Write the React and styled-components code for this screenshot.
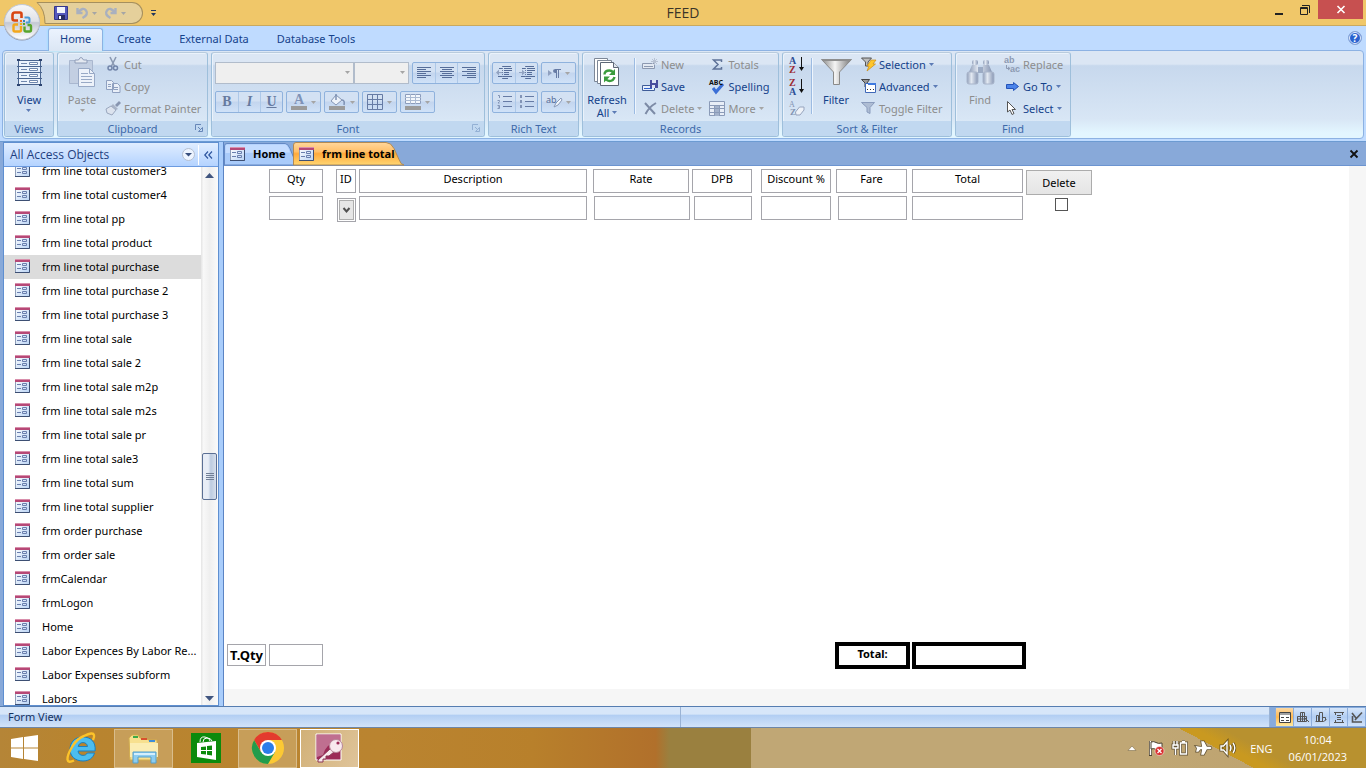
import styled, { createGlobalStyle, css } from "styled-components";

const GlobalStyle = createGlobalStyle`
  * {
    box-sizing: border-box;
  }

  body {
    margin: 0;
    font-family: "Noto Sans", "Open Sans", sans-serif;
    font-size: 11px;
    color: #000;
    overflow: hidden;
  }

  button,
  input,
  select {
    font: inherit;
    color: inherit;
    margin: 0;
    padding: 0;
  }

  svg {
    display: block;
    flex: none;
    overflow: visible;
  }
`;

/* ---------- window ---------- */

const Window = styled.div`
  display: flex;
  flex-direction: column;
  height: 100vh;
  background-color: #bfdbff;
`;
const TitleBar = styled.header`
  position: relative;
  display: flex;
  flex: none;
  align-items: flex-start;
  justify-content: space-between;
  height: 26px;
  background-color: #f0c769;
  border-bottom: 1px solid #c9a95f;
`;
const OfficeButton = styled.button`
  position: absolute;
  left: 3px;
  top: 3px;
  z-index: 2;
  border: none;
  background: none;
`;
const QuickAccess = styled.div`
  display: flex;
  align-items: center;
  height: 22px;
  margin: 2px 0 0 36px;
`;
const QuickPill = styled.div`
  display: flex;
  align-items: center;
  gap: 8px;
  height: 22px;
  width: 97px;
  padding-left: 8px;
  background-color: #e5d09b;
  border: 1px solid #a58f5d;
  border-left: none;
  border-radius: 0 11px 11px 0;
`;
const IconButton = styled.button`
  display: flex;
  align-items: center;
  justify-content: center;
  gap: 4px;
  border: none;
  background: none;
`;
const QuickMore = styled(IconButton)`
  margin-left: 8px;
`;
const AppTitle = styled.h1`
  position: absolute;
  left: 50%;
  top: 3px;
  transform: translateX(-50%);
  margin: 0;
  font-family: "Open Sans", sans-serif;
  font-size: 14px;
  line-height: 20px;
  font-weight: 400;
  color: #3a3428;
`;
const WindowButtons = styled.div`
  display: flex;
  margin-right: 3px;
`;
const WindowButton = styled.button`
  display: flex;
  align-items: center;
  justify-content: center;
  width: ${(props) => (props.$close ? "45px" : "26px")};
  height: 19px;
  border: none;
  background-color: ${(props) => (props.$close ? "#c75050" : "transparent")};
`;

/* ---------- ribbon ---------- */

const TabRow = styled.nav`
  display: flex;
  flex: none;
  align-items: flex-end;
  height: 24px;
  padding: 0 4px 0 48px;
  background-color: #bfdbff;
`;
const RibbonTab = styled.button`
  height: 22px;
  padding: 0 ${(props) => (props.$wide ? "13px" : "11px")} 2px;
  border: 1px solid transparent;
  border-bottom: none;
  border-radius: 3px 3px 0 0;
  background: none;
  line-height: 18px;
  color: #15428b;

  ${(props) =>
    props.$active &&
    css`
      position: relative;
      z-index: 1;
      height: 23px;
      margin-bottom: -1px;
      padding-bottom: 3px;
      border-color: #8db2e3;
      background: linear-gradient(#ebf3fe, #dbe6f4);
      box-shadow: 0 0 2px #7fe3ff;
    `}
`;
const HelpButton = styled(IconButton)`
  margin: 0 0 5px auto;
`;
const Ribbon = styled.section`
  display: flex;
  flex: none;
  gap: 3px;
  height: 89px;
  margin: 0 2px;
  padding: 1px;
  border: 1px solid #8db2e3;
  border-radius: 4px;
  background: linear-gradient(#dbe6f4 0 15%, #c7d8ed 17%, #d8e6f5 78%, #e3f6ff 94%);
`;
const GroupBox = styled.section`
  display: flex;
  flex-direction: column;
  flex: none;
  width: ${(props) => props.$width}px;
  border: 1px solid #9ebfdb;
  border-top-color: #b9cbdd;
  border-radius: 3px;
  box-shadow: inset 1px 1px 0 #eaf2fb;
  overflow: hidden;
`;
const GroupBody = styled.div`
  display: flex;
  flex: 1;
  min-height: 0;
  padding: 0 3px;
`;
const GroupTitle = styled.div`
  position: relative;
  height: 15px;
  line-height: 15px;
  text-align: center;
  color: #3e6aaa;
  background-color: #c1d8f0;
`;
const Launcher = styled.button`
  position: absolute;
  right: 4px;
  top: 3px;
  border: none;
  background: none;
  opacity: ${(props) => (props.disabled ? 0.5 : 1)};
`;
const BigButton = styled.button`
  display: flex;
  flex-direction: column;
  align-items: center;
  width: ${(props) => props.$width || 42}px;
  padding-top: 2px;
  border: none;
  background: none;
  line-height: 13px;
  color: ${(props) => (props.disabled ? "#8d8d8d" : "#15428b")};
`;
const BigIcon = styled.span`
  display: flex;
  align-items: center;
  height: 34px;
  margin-bottom: 4px;
`;
const BigLabel = styled.span`
  display: flex;
  flex-direction: ${(props) => (props.$inline ? "row" : "column")};
  align-items: center;
  gap: 3px;
`;
const Stack = styled.div`
  display: flex;
  flex-direction: column;
  margin-left: ${(props) => props.$gap || 0}px;
`;
const SmallButton = styled.button`
  display: flex;
  align-items: center;
  gap: 3px;
  height: 22px;
  border: none;
  background: none;
  white-space: nowrap;
  color: ${(props) => (props.disabled ? "#8d8d8d" : "#15428b")};
`;
const IconSlot = styled.span`
  display: flex;
  justify-content: center;
  width: 16px;
`;
const Separator = styled.span`
  width: 2px;
  height: 56px;
  margin: 5px 6px 0;
  background-color: #9cbbe2;
  border-right: 1px solid #eef5fd;
`;
const ToolRows = styled.div`
  display: flex;
  flex: 1;
  flex-direction: column;
  gap: 7px;
  padding-top: 9px;
`;
const ToolRow = styled.div`
  display: flex;
  gap: 3px;
`;
const Combos = styled.div`
  display: flex;
`;
const ToolGroup = styled.div`
  display: flex;
  height: 22px;
  border: 1px solid #8fb2dd;
  border-radius: 2px;
  background: linear-gradient(#d3e1f3 0 45%, #c3d5ee 50%, #d0e2f8);
`;
const ToolButton = styled.button`
  display: flex;
  align-items: center;
  justify-content: center;
  gap: 4px;
  width: ${(props) => (props.$menu ? "33px" : "22px")};
  border: none;
  background: none;

  & + & {
    border-left: 1px solid #adc8e8;
  }
`;
const SelectWrap = styled.label`
  position: relative;
  width: ${(props) => props.$width}px;
  height: 22px;

  svg {
    position: absolute;
    right: 4px;
    top: 9px;
  }
`;
const FontSelect = styled.select`
  appearance: none;
  width: 100%;
  height: 100%;
  border: 1px solid #b1bccb;
  border-radius: 0;
  background-color: #efefef;
  opacity: 1;
`;

/* ---------- navigation pane ---------- */

const Main = styled.main`
  display: flex;
  flex: 1;
  min-height: 0;
  margin-top: 2px;
  border-top: 1px solid #6c9bd2;
  background-color: #88a9d9;
`;
const NavPane = styled.aside`
  display: flex;
  flex-direction: column;
  flex: none;
  width: 216px;
  margin-left: 3px;
  border: 1px solid #5f8fd0;
  background-color: #fff;
`;
const NavHeader = styled.div`
  display: flex;
  flex: none;
  align-items: center;
  height: 24px;
  padding-left: 6px;
  border-bottom: 1px solid #6c9be0;
  background: linear-gradient(#e0edff, #b4d3ff);
`;
const NavTitle = styled.h2`
  flex: 1;
  margin: 0;
  font-family: "Open Sans", sans-serif;
  font-size: 12px;
  font-weight: 400;
  color: #1f3f80;
`;
const NavCollapse = styled(IconButton)`
  width: 20px;
  height: 20px;
  margin-left: 3px;
  border-left: 1px solid #fff;
`;
const NavBody = styled.div`
  display: flex;
  flex: 1;
  min-height: 0;
`;
const NavList = styled.ul`
  display: flex;
  flex-direction: column;
  justify-content: flex-end;
  flex: 1;
  min-width: 0;
  margin: 0;
  padding: 0;
  list-style: none;
  overflow: hidden;
`;
const NavItem = styled.li`
  flex: none;
  height: 24px;
  background-color: ${(props) => (props.$selected ? "#dcdcdc" : "transparent")};

  &:last-child {
    height: 18px;
  }
`;
const NavLink = styled.a`
  display: flex;
  align-items: center;
  gap: 12px;
  height: 22px;
  padding-left: 11px;
  text-decoration: none;
  white-space: nowrap;
  color: #000;
`;
const ScrollTrack = styled.div`
  display: flex;
  flex-direction: column;
  align-items: center;
  justify-content: space-between;
  width: 17px;
  padding: 6px 0 4px;
  background: linear-gradient(90deg, #e4e4e4, #f8f8f8 15%, #efefef 50%, #fafafa);
`;
const ScrollThumb = styled.div`
  display: flex;
  align-items: center;
  justify-content: center;
  width: 15px;
  height: 47px;
  border: 1px solid #5b6f94;
  border-radius: 2px;
  background: linear-gradient(90deg, #e8edf6 40%, #bccbe0 60%, #d8e0ec);
`;
const ScrollSpace = styled.div`
  flex: ${(props) => props.$grow};
`;

/* ---------- document ---------- */

const Splitter = styled.div`
  flex: none;
  width: 5px;
  border-right: 1px solid #5b84c4;
  background-color: #a9cdfb;
`;
const Document = styled.section`
  display: flex;
  flex: 1;
  flex-direction: column;
  min-width: 0;
  background-color: #f6f6f6;
`;
const DocTabs = styled.div`
  display: flex;
  flex: none;
  align-items: flex-end;
  height: 24px;
  border-bottom: 1px solid #6c94d0;
  background-color: #88a9d9;
`;
const DocTab = styled.button`
  position: relative;
  display: flex;
  align-items: center;
  width: ${(props) => props.$width}px;
  height: 23px;
  margin-right: -2px;
  border: none;
  background: none;
  font-family: "Open Sans", sans-serif;
  font-weight: 700;

  & > svg:first-child {
    position: absolute;
    left: 0;
    top: 0;
  }
`;
const DocTabText = styled.span`
  position: relative;
  display: flex;
  align-items: center;
  gap: 8px;
  padding-left: 6px;
  white-space: nowrap;
`;
const DocClose = styled(IconButton)`
  margin: 0 8px 7px auto;
`;
const FormArea = styled.form`
  display: flex;
  flex: 1;
  flex-direction: column;
  margin: 0 17px 17px 0;
  padding: 3px 0 20px 45px;
  background-color: #fff;
`;
const FormRow = styled.div`
  display: flex;
  align-items: flex-start;
  height: 27px;
`;
const HeadCell = styled.div`
  width: ${(props) => props.$width}px;
  height: 24px;
  margin-left: ${(props) => props.$gap}px;
  border: 1px solid #a5a5ab;
  line-height: 17px;
  text-align: center;
  white-space: nowrap;
`;
const Field = styled.input`
  width: ${(props) => props.$width}px;
  height: 24px;
  margin-left: ${(props) => props.$gap || 0}px;
  border: 1px solid #a5a5ab;
  border-radius: 0;
  background-color: #fff;
`;
const ComboButton = styled.button`
  display: flex;
  align-items: center;
  justify-content: center;
  width: 19px;
  height: 24px;
  margin: 2px 0 0 14px;
  border: 1px solid #a5a5ab;
  background-color: #e6e6e6;
  box-shadow: inset 0 0 0 1px #fff, inset 0 0 0 2px #adadad;
`;
const DeleteButton = styled.button`
  width: 66px;
  height: 25px;
  margin: 1px 0 0 3px;
  border: 1px solid #acacac;
  background: linear-gradient(#f0f0f0, #e5e5e5);
`;
const RowCheck = styled.input`
  appearance: none;
  width: 13px;
  height: 13px;
  margin: 2px 0 0 32px;
  border: 1px solid #555;
  background-color: #fff;
`;
const FormFooter = styled.div`
  display: flex;
  align-items: flex-start;
  height: 27px;
  margin: auto 0 0 -42px;
  font-weight: 700;
`;
const QtyLabel = styled.label`
  width: 39px;
  height: 22px;
  margin: 2px 3px 0 0;
  border: 1px solid #a5a5ab;
  font-size: 13px;
  line-height: 20px;
  text-align: center;
`;
const QtyField = styled(Field)`
  height: 22px;
  margin-top: 2px;
`;
const TotalLabel = styled.label`
  width: 75px;
  height: 27px;
  margin: 0 2px 0 512px;
  border: 4px solid #000;
  line-height: 16px;
  text-align: center;
`;
const TotalField = styled.input`
  width: 114px;
  height: 27px;
  border: 4px solid #000;
  border-radius: 0;
  background-color: #fff;
`;

/* ---------- status bar and taskbar ---------- */

const StatusBar = styled.footer`
  display: flex;
  flex: none;
  height: 22px;
  border-top: 1px solid #567db1;
  border-bottom: 1px solid #6d86a8;
  line-height: 20px;
  color: #15315f;
  background: linear-gradient(#d7e6f9 0 35%, #b2cef3 42%, #d2e3f9);
`;
const StatusPart = styled.span`
  flex: ${(props) => props.$grow};
  padding-left: 8px;
  border-right: 1px solid #9ab3d5;
`;
const ViewButtons = styled.div`
  display: flex;
  padding: 1px 1px 1px 5px;
  background-color: #87abdc;
`;
const ViewButton = styled(IconButton)`
  width: 18px;
  border-left: 1px solid #8faedb;
  background: ${(props) =>
    props.$active
      ? "linear-gradient(#fbd9a5, #ffb84f 50%, #ffeaa0)"
      : "linear-gradient(#d7e6f9, #b2cef3 50%, #d2e3f9)"};
`;
const Taskbar = styled.nav`
  display: flex;
  flex: none;
  align-items: center;
  height: 40px;
  background: linear-gradient(28deg, transparent 87%, #c99920 87% 88%, #b8912f 90%),
    linear-gradient(
      90deg,
      #b58537 0%,
      #b8842f 6%,
      #ba8430 28%,
      #b8802b 39%,
      #b1702b 48%,
      #9a803f 49% 55%,
      #c0a775 55% 84%,
      #bda06a
    );
`;
const TaskButton = styled.button`
  display: flex;
  align-items: center;
  justify-content: center;
  width: 59px;
  height: 39px;
  margin-right: 3px;
  border: 1px solid
    ${(props) => (props.$active ? "#fff" : props.$open ? "#d9bd8c" : "transparent")};
  background: ${(props) =>
    props.$active
      ? "linear-gradient(120deg, #d1b077, #dfc49a)"
      : props.$open
        ? "#c79e59"
        : "transparent"};
`;
const StartButton = styled(TaskButton)`
  width: 49px;
`;
const Tray = styled.div`
  display: flex;
  align-items: center;
  gap: 8px;
  margin-left: auto;
  padding-right: 19px;
  font-family: "Open Sans", sans-serif;
  color: #fff;
`;
const TrayMore = styled(IconButton)`
  margin-right: 4px;
`;
const Lang = styled.span`
  margin: 0 8px 0 6px;
`;
const Clock = styled.time`
  line-height: 17px;
  text-align: center;
`;

/* ---------- icons ---------- */

const Icon = ({ w = 16, h = 16, children, ...rest }) => (
  <svg width={w} height={h} viewBox={`0 0 ${w} ${h}`} fill="none" aria-hidden="true" {...rest}>
    {children}
  </svg>
);

const Arrow = ({ color = "#5c7bb5" }) => (
  <Icon w={5} h={3}>
    <path d="M0 0h5L2.500 3z" fill={color} />
  </Icon>
);
const GreyArrow = () => <Arrow color="#a5a5a5" />;

const OfficeLogo = () => (
  <Icon w={38} h={38}>
    <defs>
      <linearGradient id="orb" x1="0" y1="0" x2="0" y2="1">
        <stop offset="0" stopColor="#f8f8fa" />
        <stop offset=".48" stopColor="#dfe1e7" />
        <stop offset=".52" stopColor="#c3c8d3" />
        <stop offset="1" stopColor="#fff" />
      </linearGradient>
    </defs>
    <circle cx="19" cy="19.500" r="18" fill="#8b93a5" />
    <circle cx="19" cy="19" r="17.500" fill="url(#orb)" stroke="#c5cad4" />
    <path d="M15 17.500h-3.500q-2 0-2-2V12q0-2.500 2.500-2.500h5q1.500 0 1.500 1.500v4" stroke="#d94512" strokeWidth="2.600" />
    <path d="M21.500 14.500H25q1.500 0 1.500 1.500v2.500q0 1-1.500 1h-2" stroke="#4a9bd8" strokeWidth="2" />
    <path d="M15 21.500h-3q-1.500 0-1.500 1.500v4q0 1.500 1.500 1.500h4.500q1.500 0 1.500-1.500v-4" stroke="#f3a71b" strokeWidth="2.400" />
    <path d="M21.500 23.500v3.500q0 1.500 1.500 1.500h3.500q1.500 0 1.500-1.500v-3.500q0-1.500-1.500-1.500H24.500" stroke="#58a52c" strokeWidth="2.400" />
    <path d="M17 17h2v2h-2z" fill="#f06a20" />
    <path d="M20 17h2v2h-2z" fill="#357fc4" />
    <path d="M17 20h2v2h-2z" fill="#f3b21b" />
    <path d="M20 20h2v2h-2z" fill="#58a52c" />
  </Icon>
);
const QuickCurve = () => (
  <Icon w={10} h={22}>
    <path d="M1 .5Q9 7 9.500 21.500H10V.5z" fill="#e5d09b" />
    <path d="M10 .5H1Q9 7 9 21.500h1" stroke="#a58f5d" />
  </Icon>
);
const DiskIcon = () => (
  <Icon w={14} h={14}>
    <path d="M.5.5h13v13h-13z" fill="#5558bd" stroke="#34378a" />
    <path d="M3 1h8v6H3z" fill="#f2f4fb" />
    <path d="M4 9h7v5H4z" fill="#292b63" />
    <path d="M5 10h2v3H5z" fill="#fff" />
  </Icon>
);
const UndoIcon = ({ flip }) => (
  <Icon w={12} h={12}>
    <g transform={flip ? "translate(12 0) scale(-1 1)" : undefined}>
      <path d="M1.500 1v5h5M2 5.500Q7-.5 10 3.500T6.500 11" stroke="#a9b0bf" strokeWidth="2.400" />
    </g>
  </Icon>
);
const FormIcon = () => (
  <Icon w={15} h={14}>
    <defs>
      <linearGradient id="frm" x1="0" y1="0" x2="1" y2="1">
        <stop offset="0" stopColor="#fff" />
        <stop offset="1" stopColor="#b9d3f5" />
      </linearGradient>
    </defs>
    <path d="M.5.5h14v13H.5z" fill="url(#frm)" stroke="#8e9db8" />
    <path d="M14.500 3v10.500H0" stroke="#3d4f73" />
    <path d="M0 0h15v3H0z" fill="#b64876" />
    <path d="M0 0h15v1H0z" fill="#d98fac" />
    <path d="M2 5.500h4M2 9.500h4M7.500 4.500h4v2h-4zM7.500 8.500h4v2h-4z" stroke="#6a7fae" />
  </Icon>
);
const ViewIcon = () => (
  <Icon w={27} h={29}>
    <path d="M2 2h23v25H2z" fill="#eaf2fc" />
    <path d="M2.500 1.500v26M24.500 1.500v26M1 2.500h25M1 8.500h25M1 14.500h25M1 20.500h25M1 26.500h25" stroke="#49648f" />
    <path d="M5 5.500h6M5 11.500h6M5 17.500h6M5 23.500h6" stroke="#6f87ad" />
    <path d="M13.500 4.500h8v2h-8zM13.500 10.500h8v2h-8zM13.500 16.500h8v2h-8zM13.500 22.500h8v2h-8z" fill="#fff" stroke="#6f87ad" />
    <path d="M1 1h3v2H1zM23 1h3v2h-3zM1 26h3v2H1zM23 26h3v2h-3z" fill="#2d4470" />
  </Icon>
);
const PasteIcon = () => (
  <Icon w={27} h={30}>
    <path d="M.5 3.500h23v23H.5z" fill="#c3cfe2" stroke="#a9b7cf" />
    <path d="M6 6V3h3.500q2.500-5 5 0H18v3z" fill="#e4e9f1" stroke="#8f9db8" />
    <path d="M9.500 11.500h11l5 5v13h-16z" fill="#edf2fa" stroke="#98a9c6" />
    <path d="M20.500 11.500v5h5M12 16.500h7M12 19.500h11M12 22.500h11M12 25.500h11" stroke="#98a9c6" />
  </Icon>
);
const CutIcon = () => (
  <Icon w={12} h={14}>
    <path d="M3 0l4.500 9M9 0L4.500 9" stroke="#8c9ab3" strokeWidth="1.600" />
    <circle cx="3" cy="11" r="2" stroke="#7285aa" strokeWidth="1.500" />
    <circle cx="8.500" cy="11" r="2" stroke="#7285aa" strokeWidth="1.500" />
  </Icon>
);
const CopyIcon = () => (
  <Icon w={15} h={13}>
    <path d="M.5.5h5l2 2v7h-7zM6.500 3.500h5l2.500 2.500v6.500H6.500z" fill="#e9eff8" stroke="#8fa0c0" />
    <path d="M2 4.500h3M2 6.500h3M8 7.500h4M8 9.500h4" stroke="#8fa0c0" />
  </Icon>
);
const BrushIcon = () => (
  <Icon w={15} h={14}>
    <path d="M9 4l4-4 2 2-4 4z" fill="#8795b0" />
    <path d="M7 3l5 5-2 1-5-4z" fill="#a9b4c7" />
    <path d="M5 5l5 4-4 5-5-2-1-4z" fill="#dce3ee" stroke="#9aa7be" />
  </Icon>
);
const LauncherIcon = () => (
  <Icon w={8} h={8}>
    <path d="M.5 6V.5H6M3.500 7.500h4v-4z" stroke="#6787b8" />
    <path d="M3 3l3 3" stroke="#6787b8" />
  </Icon>
);
const LinesIcon = ({ short = "left" }) => {
  const x = { left: 0, center: 2, right: 5 }[short];
  const len = short === "center" ? 10 : 9;
  return (
    <Icon w={14} h={12}>
      <path
        d={`M0 .5h14M${x} 2.500h${len}M0 4.500h14M${x} 6.500h${len}M0 8.500h14M${x} 10.500h${len}`}
        stroke="#566d99"
      />
    </Icon>
  );
};
const ToolLetter = styled.span`
  font-family: "Liberation Serif", serif;
  font-size: 14px;
  line-height: 14px;
  font-weight: 700;
  font-style: ${(props) => (props.$italic ? "italic" : "normal")};
  text-decoration: ${(props) => (props.$underline ? "underline" : "none")};
  color: #667a9f;
`;
const ColorLetter = styled(ToolLetter)`
  width: 16px;
  height: 16px;
  border-bottom: 4px solid #9b9b9b;
  line-height: 12px;
  color: #7e92b7;
`;
const BucketIcon = () => (
  <Icon w={17} h={16}>
    <path d="M7 1l6 5-6 5-5-4z" fill="#eef3fa" stroke="#8495b4" />
    <path d="M7 0v6M13 6q3 0 2 5" stroke="#7d90b3" strokeWidth="1.500" />
    <path d="M0 12h16v4H0z" fill="#9b9b9b" />
  </Icon>
);
const GridIcon = () => (
  <Icon w={16} h={16}>
    <path d="M.5.5h15v15H.5zM5.500 0v16M10.500 0v16M0 5.500h16M0 10.500h16" stroke="#667ba5" />
  </Icon>
);
const AltRowIcon = () => (
  <Icon w={16} h={16}>
    <path d="M.5.5h15v9H.5z" fill="#f3f7fc" stroke="#8b9cbc" />
    <path d="M5.500 0v10M10.500 0v10M0 3.500h16M0 6.500h16" stroke="#aab9d1" />
    <path d="M0 12h16v4H0z" fill="#9b9b9b" />
  </Icon>
);
const IndentIcon = ({ flip }) => (
  <Icon w={16} h={14}>
    <path d="M7 .5h8M3 2.500h3M8 2.500h8M8 4.500h8M8 6.500h5M8 8.500h5M2 10.500h14M7 12.500h5" stroke="#566d99" />
    <path d={flip ? "M0 6h3V3.500L6 6.500 3 9.500V7H0z" : "M6 6H3V3.500L0 6.500l3 3V7h3z"} fill="#91a2c1" />
    <path d="M6.500 0v14" stroke="#6c80a6" strokeDasharray="1 1" />
  </Icon>
);
const ParagraphIcon = () => (
  <Icon w={13} h={10}>
    <path d="M0 2l4 3-4 3z" fill="#8fa0c0" />
    <path d="M9 1H7.500Q5 1 5 3t2.500 2H9z" fill="#667ba5" />
    <path d="M8.500 1v9M10.500 1v9M8 1.500h5" stroke="#667ba5" />
  </Icon>
);
const ListIcon = ({ numbered }) => (
  <Icon w={15} h={14}>
    <path d="M6 1.500h9M6 6.500h9M6 11.500h9" stroke="#667ba5" />
    {numbered ? (
      <path d="M1 .5h1.500V3M.5 5.500h2v1L1 8h1.500M.5 10.500h2v3h-2M1 12h1" stroke="#8294b6" />
    ) : (
      <path d="M1 0h2v3H1zM1 5h2v3H1zM1 10h2v3H1z" fill="#8294b6" />
    )}
  </Icon>
);
const HighlightIcon = () => (
  <Icon w={16} h={13}>
    <path d="M8 11l2-4 5-5 1 2-4 5z" fill="#f4f7fb" stroke="#8798b7" />
    <text x="0" y="7" fontSize="9" fill="#566d99">ab</text>
  </Icon>
);
const RefreshIcon = () => (
  <Icon w={26} h={29}>
    <path d="M.5.5h13v23H.5z" fill="#fff" stroke="#7d8797" />
    <path d="M3.500 2.500h14v23h-14z" fill="#fff" stroke="#7d8797" />
    <path d="M6.500 4.500h13l5 5v18h-18z" fill="#fff" stroke="#5d6777" />
    <path d="M19.500 4.500v5h5" fill="#dfe4ec" stroke="#5d6777" />
    <path d="M10.500 16.500q0-4 5-4 2 0 4 2" stroke="#3a9c3d" strokeWidth="2.400" />
    <path d="M21 11v6h-6z" fill="#3a9c3d" />
    <path d="M20.500 19q-1 4-5 4-2 0-4-2" stroke="#3a9c3d" strokeWidth="2.400" />
    <path d="M10 24.500v-6h6z" fill="#3a9c3d" />
  </Icon>
);
const NewIcon = () => (
  <Icon w={16} h={12}>
    <path d="M.5 5.500h12v5H.5z" fill="#e3e9f2" stroke="#8c99b1" />
    <path d="M2 8.500h9" stroke="#8c99b1" />
    <path d="M12.500 0v7M9 3.500h7M10 1l5 5M15 1l-5 5" stroke="#b8c2d3" />
  </Icon>
);
const SaveIcon = () => (
  <Icon w={16} h={12}>
    <path d="M.5 5.500h12v5H.5z" fill="#e6effc" stroke="#3f5c98" />
    <path d="M2 8h8v1H2z" fill="#2f5fc9" />
    <path d="M8 0h8v8H8z" fill="#4a4e9e" />
    <path d="M10 0h4v3h-4zM10 5h3v3h-3z" fill="#dfe5f5" />
  </Icon>
);
const CrossIcon = () => (
  <Icon w={13} h={13}>
    <path d="M1 1l10 11M12 1Q5 5 1.500 12" stroke="#7d8ba6" strokeWidth="2" />
  </Icon>
);
const SigmaIcon = () => (
  <Icon w={11} h={11}>
    <path d="M9.500 3V1H1.500l4.500 4.500L1.500 10h8V8" stroke="#5e7298" strokeWidth="1.500" />
  </Icon>
);
const SpellingIcon = () => (
  <Icon w={16} h={15}>
    <path d="M4 9l3 4 7-8" stroke="#3b6fd6" strokeWidth="3" />
    <text x="0" y="6" fontSize="7" fontWeight="700" fill="#111">ABC</text>
  </Icon>
);
const MoreIcon = () => (
  <Icon w={16} h={15}>
    <path d="M.5.5h15v14H.5z" fill="#e8eef7" stroke="#8b9bb8" />
    <path d="M6 4h5v11H6z" fill="#a3b2cb" />
    <path d="M0 4.500h16M0 7.500h16M0 11.500h16M5.500 4v11M10.500 4v11" stroke="#8b9bb8" />
  </Icon>
);
const SortIcon = ({ top, bottom, topColor, bottomColor }) => (
  <Icon w={16} h={17}>
    <text x="0" y="8" fontSize="10" fontWeight="700" fontFamily="Liberation Serif" fill={topColor}>{top}</text>
    <text x="0" y="17" fontSize="10" fontWeight="700" fontFamily="Liberation Serif" fill={bottomColor}>{bottom}</text>
    <path d="M12.500 1v13" stroke="#111" />
    <path d="M10 11h5l-2.500 4z" fill="#111" />
  </Icon>
);
const ClearSortIcon = () => (
  <Icon w={16} h={16}>
    <text x="0" y="7" fontSize="8" fontFamily="Liberation Serif" fill="#8494b2">A</text>
    <text x="1" y="15" fontSize="9" fontWeight="700" fontFamily="Liberation Serif" fill="#8494b2">Z</text>
    <path d="M6.500 12l4-5h4.500v3l-4 5H7z" fill="#eef2f8" stroke="#97a4bd" />
  </Icon>
);
const FunnelIcon = () => (
  <Icon w={31} h={28}>
    <defs>
      <linearGradient id="fun">
        <stop offset="0" stopColor="#878787" />
        <stop offset=".45" stopColor="#f5f5f5" />
        <stop offset="1" stopColor="#777" />
      </linearGradient>
    </defs>
    <path d="M.5 1.500h30L18.500 14v12.500h-6V14z" fill="url(#fun)" stroke="#8a8a8a" />
    <path d="M1 1h29v2H1z" fill="#8e8e8e" />
  </Icon>
);
const SelectionIcon = () => (
  <Icon w={15} h={15}>
    <path d="M.5 1h10L7 5v4H4.500V5z" fill="#bdbdbd" stroke="#555" />
    <path d="M10 3h5l-3 4h2.500L6 14l2-5H6z" fill="#ffc62b" stroke="#c88b14" strokeWidth=".7" />
  </Icon>
);
const AdvancedIcon = () => (
  <Icon w={15} h={14}>
    <path d="M.5.5h8L6 4v4H4V4z" fill="#999" stroke="#444" />
    <path d="M4.500 4.500h10v9h-10z" fill="#fff" stroke="#3f68b8" />
    <path d="M7 4h8v2H7z" fill="#3f7ae0" />
    <path d="M6 10h1v1H6zM9 10h1v1H9zM12 10h1v1h-1z" fill="#333" />
  </Icon>
);
const ToggleIcon = () => (
  <Icon w={14} h={12}>
    <path d="M.5.5h13L9 5.500v6L6 10V5.500z" fill="#aebdd4" stroke="#8a9cbd" />
  </Icon>
);
const FindIcon = () => (
  <Icon w={27} h={25}>
    <defs>
      <linearGradient id="bin">
        <stop offset="0" stopColor="#8f9eb9" />
        <stop offset=".4" stopColor="#e3e9f2" />
        <stop offset="1" stopColor="#8796b3" />
      </linearGradient>
    </defs>
    <rect x="5" width="6" height="5" rx="2" fill="url(#bin)" />
    <rect x="16" width="6" height="5" rx="2" fill="url(#bin)" />
    <path d="M5 5h6l1 7H2zM16 5h6l3 7H15z" fill="url(#bin)" />
    <path d="M11 7h5v6h-5z" fill="#9cabc4" />
    <rect y="12" width="11" height="12" rx="2" fill="url(#bin)" stroke="#a9b5ca" />
    <rect x="16" y="12" width="11" height="12" rx="2" fill="url(#bin)" stroke="#a9b5ca" />
  </Icon>
);
const ReplaceIcon = () => (
  <Icon w={16} h={15}>
    <text x="0" y="6" fontSize="9" fontWeight="700" fontFamily="Liberation Sans" fill="#8d9ab2">ab</text>
    <text x="6" y="15" fontSize="9" fontWeight="700" fontFamily="Liberation Sans" fill="#8d9ab2">ac</text>
    <path d="M2.500 8v3.500h3M4 10l2 1.500L4 13" stroke="#8d9ab2" />
  </Icon>
);
const GoToIcon = () => (
  <Icon w={13} h={9}>
    <path d="M.5 2.500h7v-2l5 4-5 4v-2h-7z" fill="#4a83ea" stroke="#2553b8" />
  </Icon>
);
const CursorIcon = () => (
  <Icon w={10} h={14}>
    <path d="M.5.5v10.500l2.500-2 2 4.500 2-1-2-4h3.500z" fill="#fff" stroke="#555" />
  </Icon>
);
const TrayIcon = ({ d, fill }) => (
  <Icon>
    <path d={d} stroke="#3c321f" strokeWidth="3" opacity=".7" />
    <path d={d} stroke="#fff" strokeWidth="1.400" fill={fill} />
  </Icon>
);

/* ---------- data ---------- */

const objects = [
  "frm line total customer3",
  "frm line total customer4",
  "frm line total pp",
  "frm line total product",
  "frm line total purchase",
  "frm line total purchase 2",
  "frm line total purchase 3",
  "frm line total sale",
  "frm line total sale 2",
  "frm line total sale m2p",
  "frm line total sale m2s",
  "frm line total sale pr",
  "frm line total sale3",
  "frm line total sum",
  "frm line total supplier",
  "frm order purchase",
  "frm order sale",
  "frmCalendar",
  "frmLogon",
  "Home",
  "Labor Expences By Labor Re...",
  "Labor Expenses subform",
  "Labors",
];

const columns = [
  { name: "Qty", width: 54, gap: 0 },
  { name: "ID", width: 20, gap: 13 },
  { name: "Description", width: 228, gap: 3 },
  { name: "Rate", width: 96, gap: 6 },
  { name: "DPB", width: 60, gap: 3 },
  { name: "Discount %", width: 70, gap: 9 },
  { name: "Fare", width: 71, gap: 5 },
  { name: "Total", width: 111, gap: 5 },
];

const fields = [
  { name: "Description", width: 228, gap: 3 },
  { name: "Rate", width: 96, gap: 7 },
  { name: "DPB", width: 58, gap: 4 },
  { name: "Discount %", width: 70, gap: 9 },
  { name: "Fare", width: 69, gap: 7 },
  { name: "Total", width: 111, gap: 5 },
];

/* ---------- parts ---------- */

const Group = ({ title, width, launcher, launcherOff, children }) => (
  <GroupBox $width={width} aria-label={title}>
    <GroupBody>{children}</GroupBody>
    <GroupTitle>
      {title}
      {launcher && (
        <Launcher disabled={launcherOff} aria-label={`${title} options`}>
          <LauncherIcon />
        </Launcher>
      )}
    </GroupTitle>
  </GroupBox>
);

const Command = ({ icon, label, menu, off }) => (
  <SmallButton disabled={off}>
    <IconSlot>{icon}</IconSlot>
    {label}
    {menu && (off ? <GreyArrow /> : <Arrow />)}
  </SmallButton>
);

const RibbonBar = () => (
  <Ribbon>
    <Group title="Views" width={50}>
      <BigButton>
        <BigIcon><ViewIcon /></BigIcon>
        <BigLabel>
          View
          <Arrow />
        </BigLabel>
      </BigButton>
    </Group>
    <Group title="Clipboard" width={151} launcher>
      <BigButton disabled>
        <BigIcon><PasteIcon /></BigIcon>
        <BigLabel>
          Paste
          <GreyArrow />
        </BigLabel>
      </BigButton>
      <Stack $gap={2}>
        <Command icon={<CutIcon />} label="Cut" off />
        <Command icon={<CopyIcon />} label="Copy" off />
        <Command icon={<BrushIcon />} label="Format Painter" off />
      </Stack>
    </Group>
    <Group title="Font" width={274} launcher launcherOff>
      <ToolRows>
        <ToolRow>
          <Combos>
            <SelectWrap $width={139}>
              <FontSelect disabled aria-label="Font" />
              <GreyArrow />
            </SelectWrap>
            <SelectWrap $width={55}>
              <FontSelect disabled aria-label="Font size" />
              <GreyArrow />
            </SelectWrap>
          </Combos>
          <ToolGroup>
            <ToolButton aria-label="Align left"><LinesIcon /></ToolButton>
            <ToolButton aria-label="Center"><LinesIcon short="center" /></ToolButton>
            <ToolButton aria-label="Align right"><LinesIcon short="right" /></ToolButton>
          </ToolGroup>
        </ToolRow>
        <ToolRow>
          <ToolGroup>
            <ToolButton><ToolLetter>B</ToolLetter></ToolButton>
            <ToolButton><ToolLetter $italic>I</ToolLetter></ToolButton>
            <ToolButton><ToolLetter $underline>U</ToolLetter></ToolButton>
          </ToolGroup>
          <ToolGroup>
            <ToolButton $menu><ColorLetter>A</ColorLetter><GreyArrow /></ToolButton>
          </ToolGroup>
          <ToolGroup>
            <ToolButton $menu aria-label="Fill color"><BucketIcon /><GreyArrow /></ToolButton>
          </ToolGroup>
          <ToolGroup>
            <ToolButton $menu aria-label="Gridlines"><GridIcon /><GreyArrow /></ToolButton>
          </ToolGroup>
          <ToolGroup>
            <ToolButton $menu aria-label="Alternate row color"><AltRowIcon /><GreyArrow /></ToolButton>
          </ToolGroup>
        </ToolRow>
      </ToolRows>
    </Group>
    <Group title="Rich Text" width={91}>
      <ToolRows>
        <ToolRow>
          <ToolGroup>
            <ToolButton aria-label="Decrease indent"><IndentIcon /></ToolButton>
            <ToolButton aria-label="Increase indent"><IndentIcon flip /></ToolButton>
          </ToolGroup>
          <ToolGroup>
            <ToolButton $menu aria-label="Direction"><ParagraphIcon /><GreyArrow /></ToolButton>
          </ToolGroup>
        </ToolRow>
        <ToolRow>
          <ToolGroup>
            <ToolButton aria-label="Numbering"><ListIcon numbered /></ToolButton>
            <ToolButton aria-label="Bullets"><ListIcon /></ToolButton>
          </ToolGroup>
          <ToolGroup>
            <ToolButton $menu aria-label="Highlight"><HighlightIcon /><GreyArrow /></ToolButton>
          </ToolGroup>
        </ToolRow>
      </ToolRows>
    </Group>
    <Group title="Records" width={197}>
      <BigButton>
        <BigIcon><RefreshIcon /></BigIcon>
        <BigLabel>Refresh</BigLabel>
        <BigLabel $inline>
          All
          <Arrow />
        </BigLabel>
      </BigButton>
      <Separator />
      <Stack>
        <Command icon={<NewIcon />} label="New" off />
        <Command icon={<SaveIcon />} label="Save" />
        <Command icon={<CrossIcon />} label="Delete" menu off />
      </Stack>
      <Stack $gap={7}>
        <Command icon={<SigmaIcon />} label="Totals" off />
        <Command icon={<SpellingIcon />} label="Spelling" />
        <Command icon={<MoreIcon />} label="More" menu off />
      </Stack>
    </Group>
    <Group title="Sort & Filter" width={170}>
      <Stack $gap={3}>
        <SmallButton aria-label="Ascending">
          <SortIcon top="A" bottom="Z" topColor="#2d4f96" bottomColor="#9c2a33" />
        </SmallButton>
        <SmallButton aria-label="Descending">
          <SortIcon top="Z" bottom="A" topColor="#9c2a33" bottomColor="#2d4f96" />
        </SmallButton>
        <SmallButton disabled aria-label="Clear all sorts"><ClearSortIcon /></SmallButton>
      </Stack>
      <Separator />
      <BigButton $width={34}>
        <BigIcon><FunnelIcon /></BigIcon>
        <BigLabel>Filter</BigLabel>
      </BigButton>
      <Stack $gap={7}>
        <Command icon={<SelectionIcon />} label="Selection" menu />
        <Command icon={<AdvancedIcon />} label="Advanced" menu />
        <Command icon={<ToggleIcon />} label="Toggle Filter" off />
      </Stack>
    </Group>
    <Group title="Find" width={116}>
      <BigButton disabled>
        <BigIcon><FindIcon /></BigIcon>
        <BigLabel>Find</BigLabel>
      </BigButton>
      <Stack $gap={3}>
        <Command icon={<ReplaceIcon />} label="Replace" off />
        <Command icon={<GoToIcon />} label="Go To" menu />
        <Command icon={<CursorIcon />} label="Select" menu />
      </Stack>
    </Group>
  </Ribbon>
);

const NavigationPane = () => (
  <NavPane>
    <NavHeader>
      <NavTitle>All Access Objects</NavTitle>
      <IconButton aria-label="Choose objects">
        <Icon w={13} h={13}>
          <circle cx="6.500" cy="6.500" r="6" fill="#edf4ff" stroke="#b5bfd0" />
          <path d="M3 5h7L6.500 8.500z" fill="#384f7d" />
        </Icon>
      </IconButton>
      <NavCollapse aria-label="Collapse">
        <Icon w={9} h={8}>
          <path d="M4 .5L.8 4 4 7.500M8 .5L4.800 4 8 7.500" stroke="#2e56a0" strokeWidth="1.200" />
        </Icon>
      </NavCollapse>
    </NavHeader>
    <NavBody>
      <NavList>
        {objects.map((name) => (
          <NavItem key={name} $selected={name === "frm line total purchase"}>
            <NavLink href="#">
              <FormIcon />
              {name}
            </NavLink>
          </NavItem>
        ))}
      </NavList>
      <ScrollTrack>
        <Icon w={9} h={5}><path d="M0 5h9L4.500 0z" fill="#40557f" /></Icon>
        <ScrollSpace $grow={270} />
        <ScrollThumb>
          <Icon w={8} h={8}><path d="M0 .5h8M0 2.500h8M0 4.500h8M0 6.500h8" stroke="#727f96" /></Icon>
        </ScrollThumb>
        <ScrollSpace $grow={192} />
        <Icon w={9} h={5}><path d="M0 0h9L4.500 5z" fill="#40557f" /></Icon>
      </ScrollTrack>
    </NavBody>
  </NavPane>
);

const LineTotalForm = () => (
  <FormArea>
    <FormRow>
      {columns.map((col) => (
        <HeadCell key={col.name} $width={col.width} $gap={col.gap}>
          {col.name}
        </HeadCell>
      ))}
      <DeleteButton type="button">Delete</DeleteButton>
    </FormRow>
    <FormRow>
      <Field aria-label="Qty" $width={54} />
      <ComboButton type="button" aria-label="ID">
        <Icon w={7} h={6}><path d="M.5 1l3 3.500L6.500 1" stroke="#505050" strokeWidth="2" /></Icon>
      </ComboButton>
      {fields.map((field) => (
        <Field key={field.name} aria-label={field.name} $width={field.width} $gap={field.gap} />
      ))}
      <RowCheck type="checkbox" aria-label="Delete row" />
    </FormRow>
    <FormFooter>
      <QtyLabel htmlFor="tqty">T.Qty</QtyLabel>
      <QtyField id="tqty" $width={54} />
      <TotalLabel htmlFor="total">Total:</TotalLabel>
      <TotalField id="total" />
    </FormFooter>
  </FormArea>
);

const App = () => {
  return (
    <Window>
      <GlobalStyle />
      <TitleBar>
        <OfficeButton aria-label="Office"><OfficeLogo /></OfficeButton>
        <QuickAccess>
          <QuickCurve />
          <QuickPill>
            <IconButton aria-label="Save"><DiskIcon /></IconButton>
            <IconButton aria-label="Undo"><UndoIcon /><GreyArrow /></IconButton>
            <IconButton aria-label="Redo"><UndoIcon flip /><GreyArrow /></IconButton>
          </QuickPill>
          <QuickMore aria-label="Customize">
            <Icon w={5} h={6}><path d="M0 0h5v1H0zM0 3h5L2.500 6z" fill="#24365c" /></Icon>
          </QuickMore>
        </QuickAccess>
        <AppTitle>FEED</AppTitle>
        <WindowButtons>
          <WindowButton aria-label="Minimize">
            <Icon w={8} h={12}><path d="M0 9h8v2H0z" fill="#222" /></Icon>
          </WindowButton>
          <WindowButton aria-label="Restore">
            <Icon w={10} h={10}><path d="M.5 2.500h7v7h-7zM0 3.500h8M2 .5h7.500V8" stroke="#222" /></Icon>
          </WindowButton>
          <WindowButton $close aria-label="Close">
            <Icon w={8} h={7}><path d="M.5 0l7 7M7.500 0l-7 7" stroke="#fff" strokeWidth="1.600" /></Icon>
          </WindowButton>
        </WindowButtons>
      </TitleBar>
      <TabRow>
        <RibbonTab $active>Home</RibbonTab>
        <RibbonTab $wide>Create</RibbonTab>
        <RibbonTab $wide>External Data</RibbonTab>
        <RibbonTab $wide>Database Tools</RibbonTab>
        <HelpButton aria-label="Help">
          <Icon w={14} h={14}>
            <circle cx="7" cy="7" r="6.500" fill="#2a62cf" stroke="#8aa6d6" />
            <circle cx="7" cy="7" r="5.500" stroke="#e3edfd" />
            <text x="4.500" y="11" fontSize="10" fontWeight="700" fill="#fff">?</text>
          </Icon>
        </HelpButton>
      </TabRow>
      <RibbonBar />
      <Main>
        <NavigationPane />
        <Splitter />
        <Document>
          <DocTabs>
            <DocTab $width={71}>
              <Icon w={71} h={23}>
                <path d="M.5 23V4Q.5 1.500 3 1.500h58q3 0 5 5l4 10V23z" fill="#a9cbfa" stroke="#6489c4" />
                <path d="M1.500 11V4q0-1.500 2-1.500H61q2 0 4 5l1 3z" fill="#c4dcff" />
              </Icon>
              <DocTabText><FormIcon />Home</DocTabText>
            </DocTab>
            <DocTab $width={112}>
              <Icon w={112} h={23}>
                <defs>
                  <linearGradient id="tab" x1="0" y1="0" x2="0" y2="1">
                    <stop offset="0" stopColor="#ffd79c" />
                    <stop offset=".4" stopColor="#ffc06a" />
                    <stop offset=".5" stopColor="#ffaa3c" />
                    <stop offset="1" stopColor="#ffd672" />
                  </linearGradient>
                </defs>
                <path d="M.5 23V3Q.5.500 3 .5h90q5 0 8 6l5 11q2 5.500 5 5.500z" fill="url(#tab)" stroke="#b38a52" />
              </Icon>
              <DocTabText><FormIcon />frm line total</DocTabText>
            </DocTab>
            <DocClose aria-label="Close form">
              <Icon w={8} h={8}><path d="M.5.5l7 7M7.500.5l-7 7" stroke="#111" strokeWidth="1.800" /></Icon>
            </DocClose>
          </DocTabs>
          <LineTotalForm />
        </Document>
      </Main>
      <StatusBar>
        <StatusPart $grow={116}>Form View</StatusPart>
        <StatusPart $grow={100} />
        <ViewButtons>
          <ViewButton $active aria-label="Form view">
            <Icon w={12} h={11}>
              <path d="M.5.5h11v10H.5z" fill="#fff" stroke="#444" />
              <path d="M0 2h12M2 5.500h3M2 8.500h3M7 5.500h3M7 8.500h3" stroke="#444" />
            </Icon>
          </ViewButton>
          <ViewButton aria-label="Pivot table view">
            <Icon w={12} h={11}><path d="M3.500 10V.5h4V10M.5 4.500h9v5h-9zM0 7h10M5.500 0v10M8 6l4 4" stroke="#555" /></Icon>
          </ViewButton>
          <ViewButton aria-label="Pivot chart view">
            <Icon w={12} h={11}><path d="M1.500 9V3.500h2V9M4.500 9V.5h3V9M.5 9.500h8l3-2M8 5.500h2.500V8" stroke="#555" /></Icon>
          </ViewButton>
          <ViewButton aria-label="Layout view">
            <Icon w={12} h={11}><path d="M1 .5h10M1 10.500h10M2.500 0v3M9.500 0v3M2.500 8v3M9.500 8v3M4 3.500h4M4 5.500h4M4 7.500h4" stroke="#555" /></Icon>
          </ViewButton>
          <ViewButton aria-label="Design view">
            <Icon w={12} h={11}><path d="M1 1l4 5M1.500 4v6H11M4 8l7-7.500" stroke="#555" strokeWidth="1.600" /></Icon>
          </ViewButton>
        </ViewButtons>
      </StatusBar>
      <Taskbar>
        <StartButton aria-label="Start">
          <Icon w={27} h={26}>
            <path d="M0 4l12-2v10.500H0zM13 2l14-2v12.500H13zM0 13.500h12V24L0 22zM13 13.500h14V26l-14-2z" fill="#fff" />
          </Icon>
        </StartButton>
        <TaskButton aria-label="Internet Explorer">
          <Icon w={32} h={32}>
            <path
              d="M17 5C8 5 4 11 4 17.500S9 29 17 29c6 0 10-3 11.500-8h-7.200c-.8 1.500-2.200 2.400-4.200 2.400-3 0-4.800-1.600-5-4.400h17C30 10 25 5 17 5zm-4.800 9.500C12.700 12 14.500 10.600 17 10.600s4.200 1.400 4.500 3.900z"
              fill="#4cbdf0"
              stroke="#1a7fc0"
              fillRule="evenodd"
            />
            <path d="M8 28.500q-6 3-6.500-1T6 15 18 4q9-4.500 10-1 .5 2-1 5" stroke="#fcc32a" strokeWidth="2.400" />
          </Icon>
        </TaskButton>
        <TaskButton $open aria-label="File Explorer">
          <Icon w={32} h={32}>
            <path d="M1 6l3-3h6l2 3h6l2 2h9v20H2z" fill="#f7e08f" stroke="#d2ad4f" />
            <path d="M5 4h5v2H5z" fill="#3daa48" />
            <path d="M13 6h6v2h-6z" fill="#d8502e" />
            <path d="M21 8h6v2h-6z" fill="#3f8ed8" />
            <path d="M2 11h28v14H2z" fill="#fbedb3" />
            <path d="M5 31V20h23v11h-5v-6H10v6z" fill="#8dcdf0" stroke="#559fcb" />
            <path d="M6 21h21v2H6z" fill="#d4effc" />
          </Icon>
        </TaskButton>
        <TaskButton aria-label="Store">
          <Icon w={30} h={30}>
            <path d="M0 0h30v30H0z" fill="#0c8a0c" />
            <path d="M6 10l19-2v19L6 24z" fill="#fff" />
            <path d="M9 9q0-6 5-5t5 4M12 9q0-4 4-4t5 3" stroke="#fff" />
            <path d="M10 14l5-.6V17h-5zM16 13l5-.6V17h-5zM10 18h5v3.600l-5-.6zM16 18h5v4.400l-5-.6z" fill="#0c8a0c" />
          </Icon>
        </TaskButton>
        <TaskButton $open aria-label="Chrome">
          <Icon w={32} h={32}>
            <circle cx="16" cy="16" r="16" fill="#fcc934" />
            <path d="M16 8h13.900A16 16 0 0 0 2.100 8l7 12z" fill="#e33b2e" />
            <path d="M2.100 8a16 16 0 0 0 13.900 24l7-12h-14z" fill="#229c4c" />
            <circle cx="16" cy="16" r="8" fill="#fff" />
            <circle cx="16" cy="16" r="6" fill="#2b7de9" />
          </Icon>
        </TaskButton>
        <TaskButton $active aria-label="Access">
          <Icon w={30} h={30}>
            <path d="M1 1h25v26H1z" fill="#9c2a57" stroke="#fff" />
            <path d="M2 2h23v8Q12 8 8 22L2 24z" fill="#bf6f90" />
            <path d="M16 15L3 27v2h5v-3h3v-3h3l5-4z" fill="#f8e9ee" stroke="#8a3555" />
            <circle cx="21" cy="13" r="6.500" fill="#f8e9ee" stroke="#b78497" />
            <circle cx="23" cy="10" r="1.600" fill="#9c2a57" />
          </Icon>
        </TaskButton>
        <Tray>
          <TrayMore aria-label="Show hidden icons">
            <Icon w={8} h={5}><path d="M0 4.500h8L4 0z" fill="#fff" stroke="#6b5933" strokeWidth=".5" /></Icon>
          </TrayMore>
          <Icon>
            <path d="M2.500 1v15" stroke="#4a4030" strokeWidth="3" />
            <path d="M2.500 1v14" stroke="#fff" strokeWidth="1.500" />
            <path d="M3 2q3-1 5 .5t6 .5v7q-4 1-6-.5T3 9z" fill="#fff" stroke="#4a4030" />
            <circle cx="11.500" cy="11" r="4.500" fill="#d92e2e" stroke="#fff" strokeWidth=".5" />
            <path d="M9.500 9l4 4M13.500 9l-4 4" stroke="#fff" strokeWidth="1.300" />
          </Icon>
          <TrayIcon d="M8.500 3h6v11h-6zM10 1.500h3M2 1v4M5 1v4M1 5h5v3H1zM3.500 8v7" />
          <TrayIcon fill="#fff" d="M1 7l3 .5h3L6 2h1.500l3 5.500H14q1.500.5 0 1h-3.500l-3 5.500H6l1-5.500H4L2 11H1l.7-3z" />
          <TrayIcon d="M1 6h2.500L7 2v12l-3.500-4H1zM10 5q2 3 0 6M13 3q3.500 5 0 10" />
          <Lang>ENG</Lang>
          <Clock>
            10:04
            <br />
            06/01/2023
          </Clock>
        </Tray>
      </Taskbar>
    </Window>
  );
};

export default App;
